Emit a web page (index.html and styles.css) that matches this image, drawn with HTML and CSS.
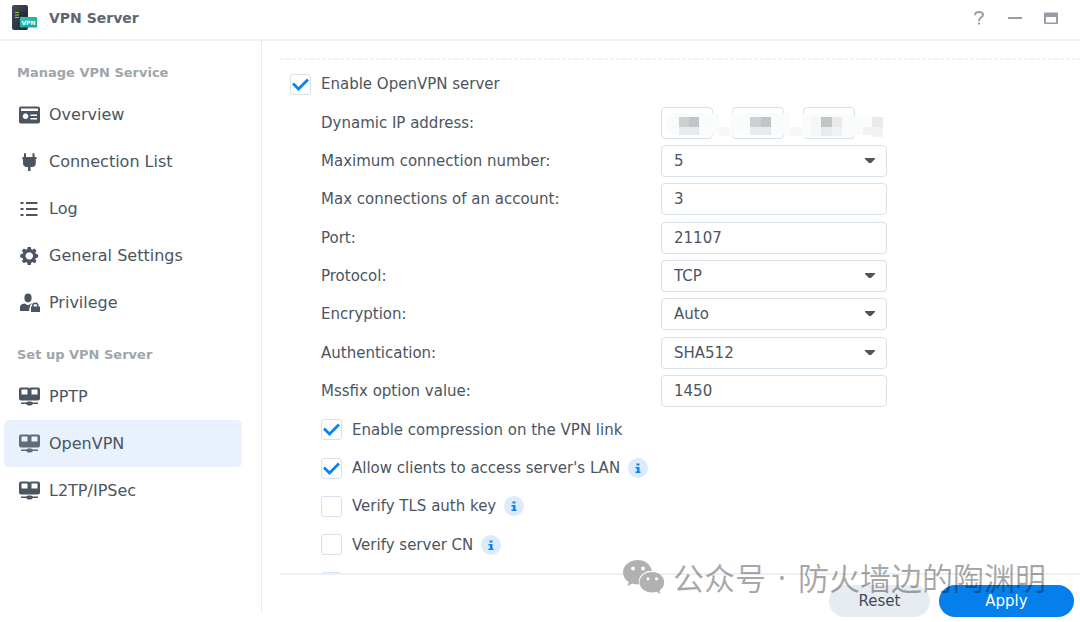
FILE: index.html
```html
<!DOCTYPE html>
<html lang="en">
<head>
<meta charset="utf-8">
<title>VPN Server</title>
<link rel="stylesheet" href="styles.css">
</head>
<body>
<svg class="defs" aria-hidden="true">
  <symbol id="i-server" viewBox="0 0 22 20">
    <path fill="currentColor" fill-rule="evenodd" d="M2 .5h7q1 0 1.500 .7Q11 .5 12 .5h7q2 0 2 2v9q0 2-2 2H2q-2 0-2-2v-9Q0 .5 2 .5zM2.500 2.500v5H8.500v-5zM12.500 2.500v5h6v-5zM7 15.500l2-1h3l2 1h5v1.500h-5l-2 1.500H9L7 17H2v-1.500z"/>
  </symbol>
</svg>
<div class="window">
  <header class="titlebar">
    <svg class="logo" viewBox="0 0 26 26" aria-hidden="true">
      <defs>
        <linearGradient id="box" x1="0" y1="0" x2="1" y2="1"><stop offset="0" stop-color="#434b5d"/><stop offset="1" stop-color="#20242f"/></linearGradient>
        <linearGradient id="tag" x1="0" y1="0" x2="1" y2="1"><stop offset="0" stop-color="#2bcab5"/><stop offset="1" stop-color="#0fa493"/></linearGradient>
      </defs>
      <rect x="1" y="0" width="16" height="25" rx="2" fill="url(#box)"/>
      <path d="M8 8h9M8 10.500h9" stroke="#222733"/>
      <path d="M4 7.500h4M4 10h4M4 12.500h4" stroke="#8fd13c"/>
      <rect x="9" y="12" width="17" height="10.500" rx="1" fill="url(#tag)"/>
      <text class="logo-text" x="17.500" y="20" text-anchor="middle">VPN</text>
    </svg>
    <h1 class="title">VPN Server</h1>
    <div class="tools">
      <button class="tool" type="button" aria-label="Help"><svg viewBox="0 0 16 16"><path d="M4 5.200Q4 1.900 8 1.900t4 2.900q0 1.500-2 2.700T8 11" fill="none" stroke="currentColor" stroke-width="2"/><path d="M7 12.500h2v2H7z" fill="currentColor"/></svg></button>
      <button class="tool" type="button" aria-label="Minimize"><svg viewBox="0 0 16 16"><path d="M1 7h14v2H1z" fill="currentColor"/></svg></button>
      <button class="tool" type="button" aria-label="Maximize"><svg viewBox="0 0 16 16"><path d="M2 2.500h12q1 0 1 1V13q0 1-1 1H2q-1 0-1-1V3.500q0-1 1-1zM3 7v5.500h10V7z" fill="currentColor" fill-rule="evenodd"/></svg></button>
    </div>
  </header>
  <div class="body">
    <nav class="sidebar">
      <h2 class="group">Manage VPN Service</h2>
      <a class="item" href="#"><svg viewBox="0 0 22 20"><path fill="currentColor" fill-rule="evenodd" d="M2 1.500h17q2 0 2 2v13q0 2-2 2H2q-2 0-2-2v-13q0-2 2-2zM2 3.500V6h17V3.500zM6.500 8.500a2.800 2.800 0 1 0 .1 0zM11.500 9.500V11H18V9.500zM11.500 13v1.500H18V13z"/></svg>Overview</a>
      <a class="item" href="#"><svg viewBox="0 0 22 20"><path fill="currentColor" d="M5 1.500q1-1.200 2 0V5h6.500V1.500q1-1.200 2 0V5h2v2h-.7v4q0 4-4 4h-1.300v4H9v-4H8q-4 0-4-4V7h-.7V5H5z"/></svg>Connection List</a>
      <a class="item" href="#"><svg viewBox="0 0 22 20"><path fill="none" stroke="currentColor" stroke-width="2" d="M1.500 4h3M7 4h11.500M1.500 10h3M7 10h11.500M1.500 16h3M7 16h11.500"/></svg>Log</a>
      <a class="item" href="#"><svg viewBox="0 0 22 20"><path fill="currentColor" fill-rule="evenodd" d="M8.700 1h3l.5 2.200 1.300.6 2-1.300 2 2-1.200 2 .5 1.300 2.300.6v3l-2.300.6-.5 1.300 1.200 2-2 2-2-1.200-1.300.6-.5 2.300h-3l-.5-2.300-1.300-.6-2 1.200-2-2 1.200-2-.5-1.300L1.200 11.400v-3l2.400-.6.5-1.300-1.200-2 2-2 2 1.300 1.300-.6zM10.200 6.200a3.700 3.700 0 1 0 .1 0z"/></svg>General Settings</a>
      <a class="item" href="#"><svg viewBox="0 0 22 20"><g fill="currentColor"><ellipse cx="9" cy="5" rx="3.600" ry="4.400"/><path d="M1 18v-4q0-3 4.500-3.600L9 12.300l3.500-1.900.8.100q-2.300 1-2.300 3v1h-.7V18z"/><path fill-rule="evenodd" d="M12 13.500h1v-1q0-3 3.300-3t3.200 3v1h1.500V19h-9zM14.500 13.500h3.600v-1q0-1.600-1.800-1.600t-1.800 1.600z"/></g></svg>Privilege</a>
      <h2 class="group group-next">Set up VPN Server</h2>
      <a class="item" href="#"><svg><use href="#i-server"/></svg>PPTP</a>
      <a class="item active" href="#" aria-current="page"><svg><use href="#i-server"/></svg>OpenVPN</a>
      <a class="item" href="#"><svg><use href="#i-server"/></svg>L2TP/IPSec</a>
    </nav>
    <main class="main">
      <form class="form" id="settings">
        <div class="row"><label class="check"><input type="checkbox" checked>Enable OpenVPN server</label></div>
        <div class="row field"><label for="ip1">Dynamic IP address:</label>
          <div class="ip">
            <input class="box" id="ip1" type="text" readonly aria-label="Dynamic IP address, part 1">
            <input class="box" type="text" readonly aria-label="Dynamic IP address, part 2">
            <input class="box" type="text" readonly aria-label="Dynamic IP address, part 3">
            <svg class="mask" viewBox="0 0 232 31" aria-hidden="true">
              <path fill="#fafbfb" d="M11 6h47v22H11q-6-3-6-11T11 6zM69 6h60v22H69zM141 7h50v24h-50zM191 9h22v19h-22z"/>
              <path fill="#f6f7f7" d="M58 20h11v9H58zM129 20h12v9h-12zM150 10h10v20h-10z"/>
              <path fill="#cdd0d2" d="M18 10h10v10H18zM89 10h11v10H89z"/>
              <path fill="#c1c5c8" d="M28 10h10v10H28zM100 10h10v10h-10zM160 10h11v10h-11z"/>
              <path fill="#e8eaeb" d="M18 20h20v8H18zM89 20h21v8H89zM160 20h11v9h-11zM171 10h10v10h-10zM211 10h11v10h-11z"/>
              <path fill="#f1f2f3" d="M171 20h10v9h-10zM211 20h11v10h-11zM202 20h9v8h-9z"/>
            </svg>
          </div></div>
        <div class="row field"><label for="max">Maximum connection number:</label><select class="box" id="max"><option>5</option></select></div>
        <div class="row field"><label for="acct">Max connections of an account:</label><input class="box" id="acct" type="text" value="3"></div>
        <div class="row field"><label for="port">Port:</label><input class="box" id="port" type="text" value="21107"></div>
        <div class="row field"><label for="proto">Protocol:</label><select class="box" id="proto"><option>TCP</option></select></div>
        <div class="row field"><label for="enc">Encryption:</label><select class="box" id="enc"><option>Auto</option></select></div>
        <div class="row field"><label for="auth">Authentication:</label><select class="box" id="auth"><option>SHA512</option></select></div>
        <div class="row field"><label for="mss">Mssfix option value:</label><input class="box" id="mss" type="text" value="1450"></div>
        <div class="row sub"><label class="check"><input type="checkbox" checked>Enable compression on the VPN link</label></div>
        <div class="row sub"><label class="check"><input type="checkbox" checked>Allow clients to access server's LAN</label><button class="info" type="button" aria-label="About LAN access"><svg viewBox="0 0 20 20"><path d="M8.500 5.500h3v2h-3zM7.500 9h4v4.500h1V15h-5v-1.500H9v-3H7.500z"/></svg></button></div>
        <div class="row sub"><label class="check"><input type="checkbox">Verify TLS auth key</label><button class="info" type="button" aria-label="About TLS auth key"><svg viewBox="0 0 20 20"><path d="M8.500 5.500h3v2h-3zM7.500 9h4v4.500h1V15h-5v-1.500H9v-3H7.500z"/></svg></button></div>
        <div class="row sub"><label class="check"><input type="checkbox">Verify server CN</label><button class="info" type="button" aria-label="About server CN"><svg viewBox="0 0 20 20"><path d="M8.500 5.500h3v2h-3zM7.500 9h4v4.500h1V15h-5v-1.500H9v-3H7.500z"/></svg></button></div>
        <div class="row sub last"><input type="checkbox" aria-label="More options"></div>
      </form>
      <footer class="footer">
        <button class="btn reset" type="reset" form="settings">Reset</button>
        <button class="btn apply" type="submit" form="settings">Apply</button>
      </footer>
    </main>
  </div>
  <div class="watermark" lang="zh-CN">
    <svg viewBox="0 0 42 34" aria-hidden="true">
      <path fill="#b1b1b1" d="M15 0C6.500 0 0 5.500 0 12.500c0 4 2.200 7.300 5.600 9.500L4.500 26l5-2.500q2.600.9 6.500.9C14.500 16 21 10.500 29 10.700 27.500 4.500 22 0 15 0z"/>
      <path fill="#b1b1b1" d="M29 12c-7 0-12.500 4.700-12.500 10.300S22 32.500 29 32.500q2.300 0 4.500-.7l4 2.200-1-3.500c2.900-1.900 4.700-4.800 4.700-8.200C41.200 16.700 36 12 29 12z"/>
      <g fill="#fff"><circle cx="10" cy="8.500" r="1.900"/><circle cx="20" cy="8.500" r="1.900"/><circle cx="25" cy="18.800" r="1.600"/><circle cx="33.500" cy="18.800" r="1.600"/></g>
    </svg>
    <span>公众号</span><span class="dot">·</span><span>防火墙边的陶渊明</span>
  </div>
</div>
</body>
</html>
```

FILE: styles.css
```css
* { box-sizing: border-box; }
body {
  margin: 0;
  background: #fff;
  color: #4b5561;
  font: 15px/20px Verdana, "DejaVu Sans", sans-serif;
}
button, input, select { font: inherit; color: inherit; }
.defs { position: absolute; width: 0; height: 0; }
.window {
  position: relative;
  display: flex;
  flex-direction: column;
  height: 100vh;
  overflow: hidden;
}
.titlebar {
  display: flex;
  align-items: center;
  height: 41px;
  flex: none;
  padding: 0 21px 4px 11px;
  border-bottom: 2px solid #edf1f6;
}
.logo { width: 26px; height: 26px; }
.logo-text { font: bold 6px "DejaVu Sans", sans-serif; fill: #fff; }
.title { margin: 0 auto 0 12px; font-size: 14px; color: #5d6671; }
.tools { display: flex; gap: 20px; }
.tool {
  width: 16px;
  height: 16px;
  padding: 0;
  border: 0;
  background: none;
  color: #969da5;
}
.tool svg { display: block; }
.body { display: flex; flex: 1; min-height: 0; }
.sidebar {
  flex: none;
  width: 262px;
  margin-bottom: 8px;
  padding: 22px 19px 0 4px;
  border-right: 1px solid #e8ebef;
}
.group {
  margin: 0 0 8px;
  padding-left: 13px;
  font-size: 13px;
  line-height: 20px;
  color: #a0a5aa;
}
.group-next { margin: 19px 0 8px; }
.item {
  display: flex;
  align-items: center;
  gap: 8px;
  height: 47px;
  padding-left: 15px;
  border-radius: 5px;
  color: #4b5561;
  font-size: 16px;
  text-decoration: none;
}
.item svg { width: 22px; height: 20px; }
.active { background: #e9f1fd; }
.active svg { opacity: .85; }
.main { display: flex; flex: 1; flex-direction: column; min-width: 0; }
.form {
  display: grid;
  flex: 1;
  grid-template-rows: repeat(13, minmax(32px, 1fr)) 9px;
  min-height: 0;
  margin: 17px 0 0 18px;
  padding: 7px 0 0 10px;
  overflow: hidden;
  background: repeating-linear-gradient(90deg, #f2f3f5 0 4px, #fff 4px 6px) top / 100% 2px no-repeat;
}
.row { display: flex; align-items: center; gap: 8px; }
.field, .sub { padding-left: 31px; }
.field {
  display: grid;
  grid-template-columns: minmax(0, 340px) minmax(0, 226px);
  gap: 0;
}
.last { align-items: flex-start; padding-top: 8px; }
.check { display: flex; align-items: center; gap: 10px; }
input[type="checkbox"] {
  appearance: none;
  flex: none;
  width: 21px;
  height: 21px;
  margin: 0;
  border: 1px solid #d7e1eb;
  border-radius: 3px;
  background: #fff;
}
input[type="checkbox"]:checked {
  background: #fff url("data:image/svg+xml,%3Csvg xmlns='http://www.w3.org/2000/svg' viewBox='0 0 19 19'%3E%3Cpath d='M2 8.500l5.500 5.500L17 4.500' fill='none' stroke='%230684f2' stroke-width='2.800'/%3E%3C/svg%3E") center / 19px 19px;
}
.box {
  width: 100%;
  min-width: 0;
  height: 32px;
  padding: 0 12px;
  border: 1px solid #d7e1eb;
  border-radius: 4px;
  background: #fff;
}
select.box {
  appearance: none;
  background: #fff url("data:image/svg+xml,%3Csvg xmlns='http://www.w3.org/2000/svg' viewBox='0 0 10 6'%3E%3Cpath d='M0 0h10v1L6 5H4L0 1z' fill='%234b5561'/%3E%3C/svg%3E") right 11px center / 10px 6px no-repeat;
}
.ip { position: relative; display: flex; gap: 19px; }
.ip .box { width: 52px; }
.mask { position: absolute; top: 0; left: 0; width: 232px; height: 31px; }
.info {
  width: 20px;
  height: 20px;
  padding: 0;
  border: 0;
  border-radius: 50%;
  background: #dceafd;
}
.info svg { display: block; fill: #0684f2; }
.footer {
  display: flex;
  flex: none;
  justify-content: flex-end;
  gap: 9px;
  margin-left: 18px;
  padding: 10px 6px 5px 0;
  border-top: 2px solid #edf1f6;
}
.btn { height: 32px; padding: 0; border: 0; border-radius: 16px; }
.reset { width: 101px; background: #e7ecf1; color: #414b5a; }
.apply { width: 135px; background: #057feb; color: #fff; }
.watermark {
  position: absolute;
  right: 34px;
  bottom: 23px;
  display: flex;
  align-items: center;
  color: rgba(0, 0, 0, .34);
  font: 31px/44px "Noto Sans CJK SC", sans-serif;
  white-space: nowrap;
  pointer-events: none;
}
.watermark svg { width: 42px; height: 34px; margin-right: 8px; }
.dot { width: 32px; text-align: center; font-family: "Noto Sans", sans-serif; }
```
